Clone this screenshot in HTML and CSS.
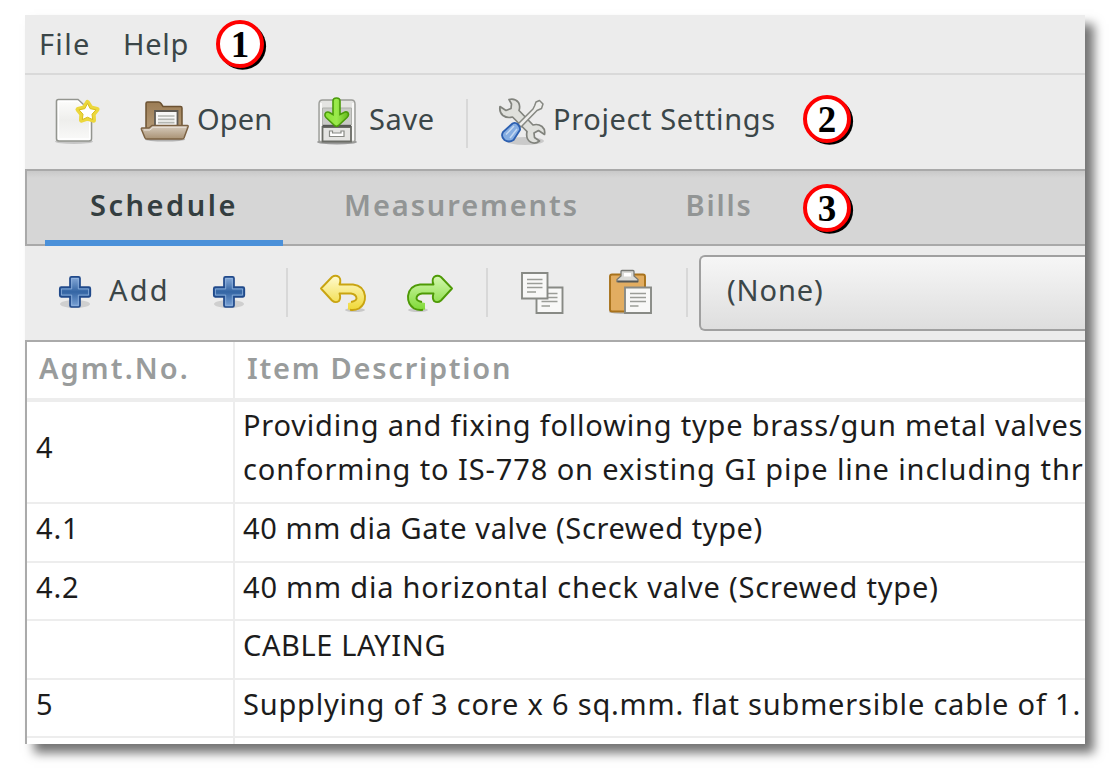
FILE: index.html
```html
<!DOCTYPE html>
<html lang="en">
<head>
<meta charset="utf-8">
<title>Schedule</title>
<link rel="stylesheet" href="styles.css">
</head>
<body>
<div class="window">
  <div class="menubar">
    <span class="menu-file">File</span>
    <span class="menu-help">Help</span>
    <svg class="mark mark-1" viewBox="0 0 52 52"><circle cx="27.5" cy="27.2" r="23.6" fill="#000"/><circle cx="25" cy="25" r="22" fill="#fff" stroke="#f00" stroke-width="4"/><text x="25" y="37.5">1</text></svg>
  </div>
  <div class="toolbar main-tools">
    <svg class="ic-new" width="48" height="50" viewBox="53 96 48 50">
      <defs><linearGradient id="paper" x1="0" y1="0" x2="0" y2="1"><stop offset="0" stop-color="#fdfdfc"/><stop offset=".5" stop-color="#eeeeec"/><stop offset="1" stop-color="#fafaf9"/></linearGradient></defs>
      <ellipse cx="74" cy="141.5" rx="19" ry="2.5" fill="#000" opacity=".16"/>
      <path d="M58.5 99.500H78L91.500 112V138.500Q91.500 141 89 141H59Q56.500 141 56.500 138.500V101.500Q56.500 99.500 58.500 99.500Z" fill="url(#paper)" stroke="#93958f" stroke-width="1.600"/>
      <path d="M58.500 101.500H78L89.700 113V139H58.500Z" fill="none" stroke="#fff" stroke-width="1.400"/>
      <path d="M87.500 102.500L91 108L97 109.500L93.200 114.300L93.500 120.200L87.500 118.200L81.500 120.200L81.800 114.300L78 109.500L84 108Z" fill="#f3e04a" stroke="#ecd73c" stroke-width="5" stroke-linejoin="round"/>
      <path d="M87.500 103.500L90.200 108.700L96 109.800L92 114.200L92.700 119.600L87.500 117.200L82.300 119.600L83 114.200L79 109.800L84.800 108.700Z" fill="#fff" stroke="#d9be1a" stroke-width="1"/>
    </svg>
    <svg class="ic-open" width="50" height="42" viewBox="140 101 50 42">
      <defs><linearGradient id="fold" x1="0" y1="0" x2="0" y2="1"><stop offset="0" stop-color="#9c7d55"/><stop offset="1" stop-color="#b59b78"/></linearGradient><linearGradient id="flap" x1="0" y1="0" x2="0" y2="1"><stop offset="0" stop-color="#d8cdbf"/><stop offset="1" stop-color="#a99274"/></linearGradient></defs>
      <ellipse cx="165" cy="140.500" rx="20" ry="2" fill="#000" opacity=".25"/>
      <path d="M146 132V104.500Q146 103 147.500 103H158.500Q160 103 161 104.500L163 107.500H180.500Q182 107.500 182 109V132Z" fill="url(#fold)" stroke="#6b5131" stroke-width="1.500"/>
      <path d="M155 130V112H177.500V130Z" fill="#f7f7f6" stroke="#5e5a53" stroke-width="1.800"/>
      <path d="M158 117H174.500M158 120.300H174.500M158 123.600H174.500" stroke="#b4b6b1" stroke-width="1.700"/>
      <path d="M142 129H149L152 126.500H187.500Q188.500 126.500 188 128L184 139Q183.500 140 182 140H147Q145.500 140 145 139L141.500 130.500Q141 129 142 129Z" fill="url(#flap)" stroke="#7c6243" stroke-width="1.500"/>
      <path d="M144 131H150L153 128.300H186" fill="none" stroke="#e9e2d8" stroke-width="1"/>
    </svg>
    <span class="lbl-open">Open</span>
    <svg class="ic-save" width="42" height="50" viewBox="316 97 42 50">
      <defs><linearGradient id="arr" x1="0" y1="0" x2="1" y2="0"><stop offset="0" stop-color="#8ae234"/><stop offset=".5" stop-color="#9bea4c"/><stop offset="1" stop-color="#63b81c"/></linearGradient></defs>
      <ellipse cx="337" cy="143" rx="20" ry="2.500" fill="#000" opacity=".35"/>
      <path d="M322.500 101H351.500Q355 101 355 105V141Q355 143 353 143H321Q319 143 319 141V105Q319 101 322.500 101Z" fill="#e4e4e2" stroke="#9b9c98" stroke-width="1.400"/>
      <path d="M321 104V141M353 104V141" stroke="#fff" stroke-width="1.500"/>
      <path d="M322.500 109H351.500V126H322.500Z" fill="#c9cac7" stroke="#aeb0ab"/>
      <path d="M322.500 128H351V142.500H322.500Z" fill="#e4e4e2" stroke="#6a6c66" stroke-width="1.800"/>
      <path d="M322.500 126.800H351" stroke="#555753" stroke-width="1.800"/>
      <path d="M329.500 132V137.500H344V132H341V134H332.500V132Z" fill="#fff" stroke="#888a85" stroke-width="1.200"/>
      <path d="M333 102Q333 99 336.500 99Q340 99 340 102V115.500L345 113Q348 112.500 348.500 115.500Q348.500 117 347 118.500L338.500 126.500Q336.500 128 334.500 126.500L326 118.500Q324.500 117 325 115Q326 112.500 329 113.200L333 115.500Z" fill="url(#arr)" stroke="#4a9a0a" stroke-width="1.600"/>
    </svg>
    <span class="lbl-save">Save</span>
    <i class="sep sep-a"></i>
    <svg class="ic-tools" width="50" height="50" viewBox="498 96 50 50">
      <ellipse cx="525" cy="141" rx="19" ry="4" fill="#000" opacity=".14"/>
      <path d="M509 99.500Q515 98 518.500 102.500Q520.500 106 519 110.500L533 125Q538 123.500 542 126.500Q545.500 129.500 544.500 134.500L538.500 130.500L534 133L534.500 137.500L539.500 141Q535 144.500 530.500 142Q525.500 139 527 131.500L512.500 117Q507 118.500 503 115.500Q499 112 500 106.500L506 110.500L511 108.500L511.500 104Z" fill="#dfe0dc" stroke="#81837d" stroke-width="1.700" stroke-linejoin="round"/>
      <path d="M534.500 106L536 102L539.500 100.500L543 104L541.500 108.500L537 110.500L521 127L518 124L533 109Z" fill="#eeeeec" stroke="#868882" stroke-width="1.500" stroke-linejoin="round"/>
      <path d="M512.500 123.500Q515.500 122 518 124.500Q520.500 127 520 130L513.500 140Q509 143 504.500 140Q500.500 136.500 503 132Z" fill="#86aee2" stroke="#2c5fb0" stroke-width="1.800"/>
      <path d="M514 126L506 134.500M517 129L510 138" stroke="#c4d8f1" stroke-width="1.500"/>
    </svg>
    <span class="lbl-project">Project Settings</span>
    <svg class="mark mark-2" viewBox="0 0 52 52"><circle cx="27.500" cy="27.200" r="23.600" fill="#000"/><circle cx="25" cy="25" r="22" fill="#fff" stroke="#f00" stroke-width="4"/><text x="25" y="37.500">2</text></svg>
  </div>
  <div class="tabs">
    <div class="tab tab-schedule active"><span>Schedule</span></div>
    <div class="tab tab-meas"><span>Measurements</span></div>
    <div class="tab tab-bills"><span>Bills</span></div>
    <svg class="mark mark-3" viewBox="0 0 52 52"><circle cx="27.500" cy="27.200" r="23.600" fill="#000"/><circle cx="25" cy="25" r="22" fill="#fff" stroke="#f00" stroke-width="4"/><text x="25" y="37.500">3</text></svg>
  </div>
  <div class="toolbar edit-tools">
    <svg class="ic-add" width="36" height="38" viewBox="57 273 36 38">
      <defs><linearGradient id="plus" x1="0" y1="0" x2="0" y2="1"><stop offset="0" stop-color="#88abd9"/><stop offset=".5" stop-color="#3465a4"/><stop offset="1" stop-color="#7ba3d6"/></linearGradient></defs>
      <g id="plus-shape"><ellipse cx="75" cy="303" rx="15" ry="4" fill="#000" opacity=".12"/>
      <path d="M71.500 275.800H78.500Q80 275.800 80 277.300V286.200H89Q90.300 286.200 90.300 287.700V294.300Q90.300 295.800 89 295.800H80V304.500Q80 306 78.500 306H71.500Q70 306 70 304.500V295.800H61.200Q59.800 295.800 59.800 294.300V287.700Q59.800 286.200 61.200 286.200H70V277.300Q70 275.800 71.500 275.800Z" fill="url(#plus)" stroke="#20498a" stroke-width="1.700"/>
      <path d="M71.700 277.500H78.300V288H88.500V294H78.300V304.300H71.700V294H61.500V288H71.700Z" fill="none" stroke="#9bbbe4" stroke-width="1" opacity=".65"/></g>
    </svg>
    <span class="lbl-add">Add</span>
    <svg class="ic-add2" width="36" height="38" viewBox="57 273 36 38"><use href="#plus-shape"/></svg>
    <i class="sep sep-b"></i>
    <svg class="ic-undo" width="50" height="40" viewBox="318 271 50 40">
      <defs>
        <linearGradient id="und" x1="0" y1="0" x2="0" y2="1"><stop offset="0" stop-color="#fffbd0"/><stop offset="1" stop-color="#f0d835"/></linearGradient>
        <linearGradient id="red" x1="0" y1="0" x2="0" y2="1"><stop offset="0" stop-color="#d5f8b2"/><stop offset="1" stop-color="#7fd935"/></linearGradient>
      </defs>
      <ellipse cx="355" cy="308" rx="10" ry="2" fill="#000" opacity=".15"/>
      <path d="M348 307.500Q354 309 359 306.500Q365.500 302 365 294Q363.500 283.500 353 282.500H339.500Q341.500 278 339 275Q335.500 272.500 332 275L321 286.500L332 298.500Q335.500 301.500 339 299Q341 296 339.500 291.500H351Q356.500 292.500 356.500 296.500Q355.500 300 348 301Z" fill="url(#und)"/>
      <path d="M350 307.800Q355 308.500 359 306.500Q365.500 302 365 294Q363.500 283.500 353 282.500H339.500Q341.500 278 339 275Q335.500 272.500 332 275L321 286.500L332 298.500Q335.500 301.500 339 299Q341 296 339.500 291.500H351Q356.500 292.500 356.500 296.500Q356 299 351 300" fill="none" stroke="#c9a411" stroke-width="1.900" stroke-linejoin="round"/>
    </svg>
    <svg class="ic-redo" width="50" height="40" viewBox="318 271 50 40"><g transform="translate(686 0) scale(-1 1)">
      <ellipse cx="355" cy="308" rx="10" ry="2" fill="#000" opacity=".15"/>
      <path d="M348 307.500Q354 309 359 306.500Q365.500 302 365 294Q363.500 283.500 353 282.500H339.500Q341.500 278 339 275Q335.500 272.500 332 275L321 286.500L332 298.500Q335.500 301.500 339 299Q341 296 339.500 291.500H351Q356.500 292.500 356.500 296.500Q355.500 300 348 301Z" fill="url(#red)"/>
      <path d="M350 307.800Q355 308.500 359 306.500Q365.500 302 365 294Q363.500 283.500 353 282.500H339.500Q341.500 278 339 275Q335.500 272.500 332 275L321 286.500L332 298.500Q335.500 301.500 339 299Q341 296 339.500 291.500H351Q356.500 292.500 356.500 296.500Q356 299 351 300" fill="none" stroke="#4e9a06" stroke-width="1.900" stroke-linejoin="round"/></g>
    </svg>
    <i class="sep sep-c"></i>
    <svg class="ic-copy" width="46" height="46" viewBox="520 269 46 46">
      <g id="sheet"><path d="M537.500 286.500H563.500V312H537.500Z" fill="#f8f8f7" stroke="#888a85" stroke-width="1.900"/><path d="M542.500 292.500H558.500M542.500 296.500H558.500M542.500 300.500H558.500M542.500 305H551" stroke="#9b9d98" stroke-width="1.700"/></g>
      <path d="M523 272H548.500V297.500H523Z" fill="#f8f8f7" stroke="#888a85" stroke-width="1.900"/><path d="M528 278.500H543.500M528 282.500H543.500M528 286.500H543.500M528 291H537" stroke="#9b9d98" stroke-width="1.700"/>
    </svg>
    <svg class="ic-paste" width="46" height="48" viewBox="610 268 46 48">
      <ellipse cx="630" cy="311" rx="19" ry="2" fill="#000" opacity=".2"/>
      <path d="M614 273.500H645Q647 273.500 647 275.500V308.500Q647 310.500 645 310.500H614Q612 310.500 612 308.500V275.500Q612 273.500 614 273.500Z" fill="#e2ad61" stroke="#a8721c" stroke-width="1.900"/>
      <path d="M623 270.500Q623 269.500 624 269.500H635Q636 269.500 636 270.500V275L640 278.500V280.500H619V278.500L623 275Z" fill="#d9dad7" stroke="#777974" stroke-width="1.300"/><path d="M626 272H633V275.500H626Z" fill="#fff"/><path d="M619.500 280.500H640" stroke="#555753" stroke-width="1.800"/>
      <use href="#sheet" transform="translate(89.500 0)"/>
    </svg>
    <i class="sep sep-d"></i>
    <div class="combo"><span>(None)</span></div>
  </div>
  <div class="grid">
    <div class="row head"><div class="c1"><span class="h-no">Agmt.No.</span></div><div class="c2"><span class="h-desc">Item Description</span></div></div>
    <div class="row tall"><div class="c1"><span>4</span></div><div class="c2"><span>Providing and fixing following type brass/gun metal valves</span><span class="looser">conforming to IS-778 on existing GI pipe line including thr</span></div></div>
    <div class="row"><div class="c1"><span>4.1</span></div><div class="c2"><span class="tighter">40 mm dia Gate valve (Screwed type)</span></div></div>
    <div class="row"><div class="c1"><span>4.2</span></div><div class="c2"><span>40 mm dia horizontal check valve (Screwed type)</span></div></div>
    <div class="row"><div class="c1"></div><div class="c2"><span class="tighter">CABLE LAYING</span></div></div>
    <div class="row"><div class="c1"><span>5</span></div><div class="c2"><span>Supplying of 3 core x 6 sq.mm. flat submersible cable of 1.</span></div></div>
    <div class="row last"><div class="c1"></div><div class="c2"></div></div>
  </div>
</div>
</body>
</html>
```
FILE: styles.css
```css
* { box-sizing: border-box; }
body { margin: 0; padding: 15px 0 0 25px; min-height: 100vh; background: #fff; overflow: hidden; font-family: "Noto Sans", "Open Sans", sans-serif; font-size: 29px; color: #3b4648; }
.window { width: 1060px; height: 729px; display: flex; flex-direction: column; background: #ececec; box-shadow: 9px 9px 10px rgba(0,0,0,.55); }
.window span { white-space: pre; flex: none; }
.window svg { flex: none; display: block; }
.menubar { height: 60px; flex: none; display: flex; align-items: center; padding: 0 0 1px 14px; border-bottom: 2px solid #d9d9d9; }
.menu-file { width: 84px; letter-spacing: 1.3px; }
.menu-help { width: 92px; letter-spacing: .75px; }
.mark { width: 52px; height: 52px; }
.mark-1 { margin-top: 2px; }
.mark text { font: bold 37px "Liberation Serif", serif; text-anchor: middle; fill: #000; }
.toolbar { display: flex; align-items: center; flex: none; }
.toolbar > span { margin-top: -6px; }
.sep { width: 2px; height: 49px; background: #d8d8d8; flex: none; }
.main-tools { height: 94px; padding: 0 0 2px 28px; }
.ic-open { margin-left: 39px; }
.lbl-open { width: 118px; margin-left: 7px; letter-spacing: .1px; }
.ic-save { margin-left: 1px; }
.lbl-save { width: 97px; margin-left: 11px; letter-spacing: .6px; }
.sep-a { margin-top: 5px; }
.ic-tools { margin-left: 30px; }
.lbl-project { width: 249px; margin-left: 5px; letter-spacing: .63px; }
.mark-2 { margin-top: -3px; }
.tabs { height: 77px; flex: none; display: flex; align-items: stretch; padding-left: 18px; background: linear-gradient(#c9c9c9, #d6d6d6 7px); border: solid #a9a9a9; border-width: 2px 0 2px 2px; font-weight: 600; color: #929595; }
.tab { display: flex; align-items: center; justify-content: center; margin-bottom: -2px; padding-bottom: 2px; border-bottom: 6px solid transparent; }
.active { color: #343e40; border-color: #4a90d9; }
.tab-schedule { width: 238px; letter-spacing: 2.5px; }
.tab-meas { width: 357px; letter-spacing: 1.9px; }
.tab-bills { width: 162px; letter-spacing: 1.8px; padding-right: 4px; }
.mark-3 { margin-top: 12px; }
.edit-tools { height: 94px; padding: 0 0 1px 32px; }
.lbl-add { width: 102px; margin-left: 16px; letter-spacing: 2.2px; }
.sep-b { margin-left: 39px; }
.ic-undo { margin-left: 30px; }
.ic-redo { margin-left: 37px; }
.sep-c { margin-left: 31px; }
.ic-copy { margin-left: 31px; }
.ic-paste { margin-left: 43px; }
.sep-d { margin-left: 32px; }
.combo { flex: 1; height: 76px; margin-left: 11px; padding: 0 0 6px 26px; display: flex; align-items: center; border: solid #a0a0a0; border-width: 2px 0 2px 2px; border-radius: 6px 0 0 6px; background: linear-gradient(#f6f6f6, #dedede); letter-spacing: .9px; }
.grid { flex: 1; overflow: hidden; background: #fff; border: solid #aaa; border-width: 2px 0 0 2px; color: #1c1c1c; letter-spacing: .8px; }
.row { display: grid; grid-template-columns: 208px 1fr; height: 58.5px; }
.row > div { border-bottom: 2px solid #ededed; display: flex; flex-direction: column; justify-content: center; align-items: flex-start; overflow: hidden; line-height: 44px; padding-bottom: 8px; }
.row > .c1 { border-right: 2px solid #ededed; padding-left: 9px; }
.row > .c2 { padding-left: 8px; }
.looser { letter-spacing: .9px; }
.tighter { letter-spacing: .6px; }
.head { height: 60px; color: #999c9c; font-weight: 600; }
.row.head > div { border-bottom-width: 4px; padding: 0 0 5px 12px; }
.h-no { letter-spacing: 2.1px; }
.h-desc { letter-spacing: 1.75px; }
.row.tall { height: 102px; }
.row.tall > div { padding-bottom: 10px; }
```
